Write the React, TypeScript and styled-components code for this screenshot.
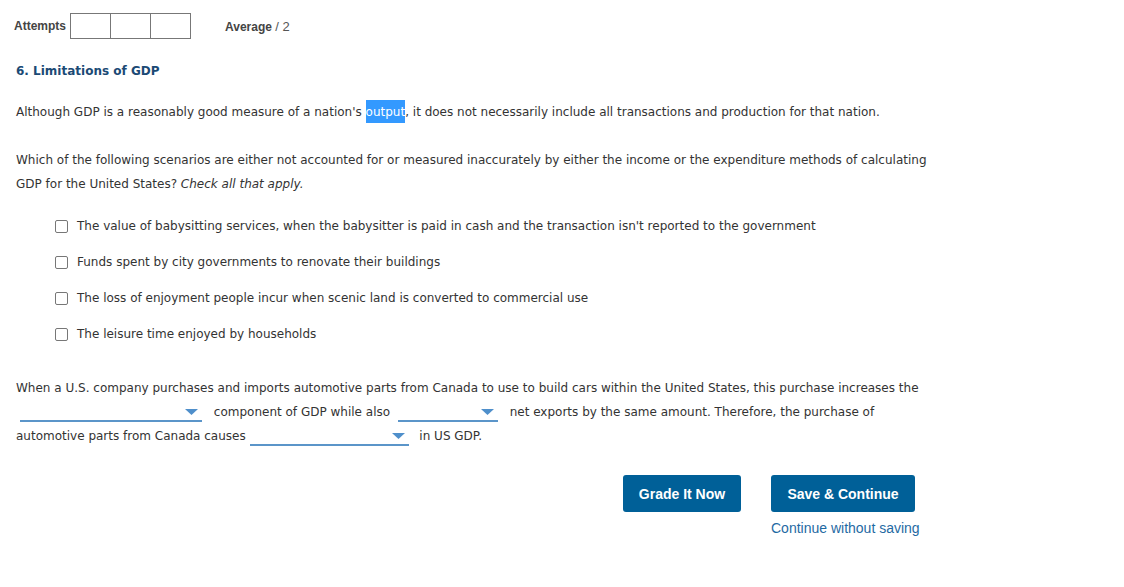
import React from "react";
import styled, { createGlobalStyle } from "styled-components";

const Global = createGlobalStyle`
  html, body { margin: 0; padding: 0; background: #fff; }
  body { font-family: "DejaVu Sans", Verdana, sans-serif; color: #333; }
`;

const Page = styled.div`
  padding: 13px 16px 0 14px;
  width: 1124px;
  box-sizing: border-box;
`;

const AttemptsBar = styled.div`
  display: flex;
  align-items: center;
  height: 26px;
  font-family: "Liberation Sans", Arial, sans-serif;
  font-size: 12px;
  color: #444;
`;

const Label = styled.span`
  font-weight: bold;
  margin-right: 4px;
`;

const Boxes = styled.div`
  display: flex;
  height: 26px;
  border: 1px solid #777;
  box-sizing: border-box;
`;

const Box = styled.div`
  width: 39px;
  height: 100%;
  & + & { border-left: 1px solid #777; }
`;

const Average = styled.div`
  margin-left: 34px;
  font-size: 12px;
  & b { font-weight: bold; }
  & span { font-size: 13px; color: #555; }
`;

const Heading = styled.h2`
  margin: 24px 0 0 2px;
  font-size: 12px;
  font-weight: bold;
  color: #1b4a75;
  line-height: 16px;
`;

const Para = styled.p<{ $top: number }>`
  margin: ${(p) => p.$top}px 0 0 2px;
  width: 918px;
  font-size: 12px;
  line-height: 24px;
  color: #333;
`;

const Highlight = styled.span`
  background: #3399ff;
  color: #fff;
  padding: 5px 0 4px;
`;

const Options = styled.div`
  margin: 20px 0 0 41px;
  display: flex;
  flex-direction: column;
  gap: 16px;
`;

const Option = styled.label`
  display: flex;
  align-items: center;
  height: 20px;
  font-size: 12px;
  color: #333;
`;

const Check = styled.span`
  width: 11px;
  height: 11px;
  border: 1px solid #777;
  border-radius: 2px;
  margin-right: 9px;
  flex: none;
`;

const Select = styled.span<{ $w: number; $l: number; $r: number }>`
  display: inline-block;
  overflow: hidden;
  width: ${(p) => p.$w}px;
  border-bottom: 2px solid #5b95c9;
  vertical-align: -6px;
  margin: 0 ${(p) => p.$r}px 0 ${(p) => p.$l}px;
`;

const SelectInner = styled.span`
  display: flex;
  justify-content: flex-end;
  align-items: flex-end;
  height: 16px;
  padding: 0 4px 5px 0;
  box-sizing: border-box;
`;

const Arrow = styled.svg`
  display: block;
  width: 13px;
  height: 6px;
`;

const Actions = styled.div`
  display: flex;
  justify-content: flex-start;
  margin: 27px 0 0 609px;
  gap: 30px;
  font-family: "Liberation Sans", Arial, sans-serif;
`;

const Stack = styled.div`
  display: flex;
  flex-direction: column;
  align-items: flex-start;
`;

const Button = styled.button<{ $w: number }>`
  width: ${(p) => p.$w}px;
  height: 37px;
  background: #006098;
  color: #fff;
  border: none;
  border-radius: 3px;
  font-family: "Liberation Sans", Arial, sans-serif;
  font-size: 14px;
  font-weight: bold;
  padding: 0;
`;

const Link = styled.a`
  margin-top: 7px;
  font-size: 14px;
  color: #1f6aa3;
  text-decoration: none;
  line-height: 18px;
`;

const Dropdown = ({ w, l, r }: { w: number; l: number; r: number }) => (
  <Select $w={w} $l={l} $r={r}>
    <SelectInner>
      <Arrow viewBox="0 0 13 6">
        <polygon points="0,0 13,0 6.5,6" fill="#4f8fcb" />
      </Arrow>
    </SelectInner>
  </Select>
);

const options = [
  "The value of babysitting services, when the babysitter is paid in cash and the transaction isn't reported to the government",
  "Funds spent by city governments to renovate their buildings",
  "The loss of enjoyment people incur when scenic land is converted to commercial use",
  "The leisure time enjoyed by households",
];

export default function App() {
  return (
    <Page>
      <Global />
      <AttemptsBar>
        <Label>Attempts</Label>
        <Boxes>
          <Box />
          <Box />
          <Box />
        </Boxes>
        <Average>
          <b>Average</b> <span>/ 2</span>
        </Average>
      </AttemptsBar>
      <Heading>6. Limitations of GDP</Heading>
      <Para $top={21}>
        Although GDP is a reasonably good measure of a nation's <Highlight>output</Highlight>, it does not necessarily include all transactions and production for that nation.
      </Para>
      <Para $top={24}>
        Which of the following scenarios are either not accounted for or measured inaccurately by either the income or the expenditure methods of calculating GDP for the United States? <i>Check all that apply.</i>
      </Para>
      <Options>
        {options.map((o) => (
          <Option key={o}>
            <Check />
            {o}
          </Option>
        ))}
      </Options>
      <Para $top={32}>
        When a U.S. company purchases and imports automotive parts from Canada to use to build cars within the United States, this purchase increases the{" "}
        <Dropdown w={182} l={4} r={8} /> component of GDP while also <Dropdown w={100} l={4} r={8} /> net exports by the same amount. Therefore, the purchase of automotive parts from Canada causes <Dropdown w={159} l={0} r={7} /> in US GDP.
      </Para>
      <Actions>
        <Button $w={118}>Grade It Now</Button>
        <Stack>
          <Button $w={144}>Save &amp; Continue</Button>
          <Link>Continue without saving</Link>
        </Stack>
      </Actions>
    </Page>
  );
}
